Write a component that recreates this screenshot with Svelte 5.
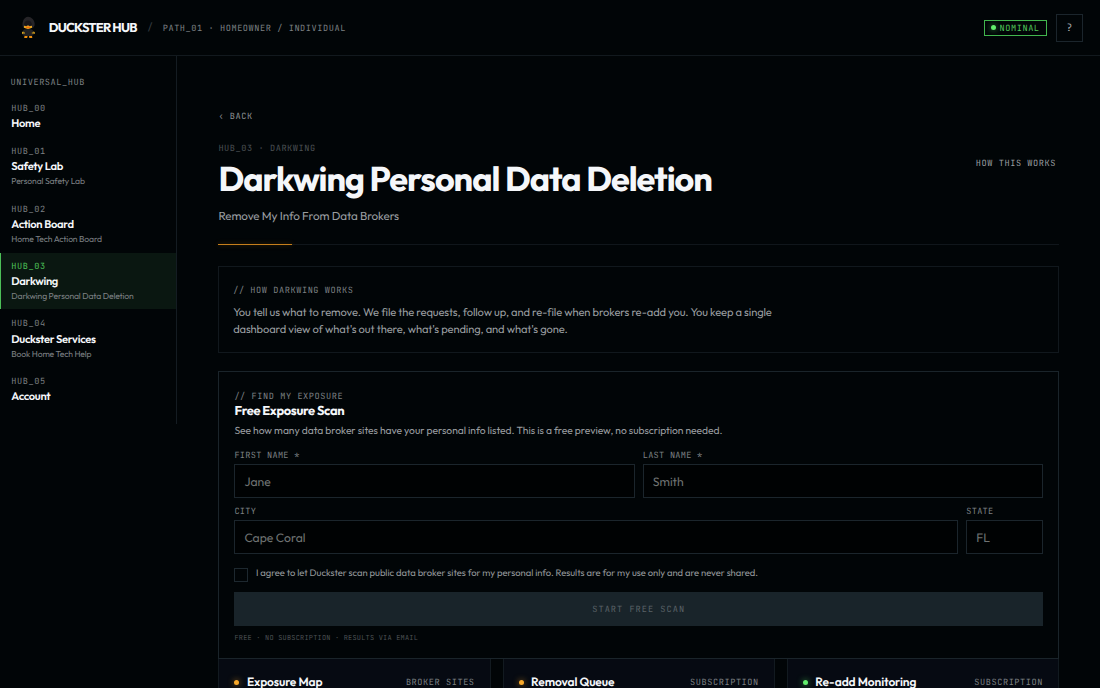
<script>
  const hubs = [
    { code: 'HUB_00', name: 'Home' },
    { code: 'HUB_01', name: 'Safety Lab', sub: 'Personal Safety Lab' },
    { code: 'HUB_02', name: 'Action Board', sub: 'Home Tech Action Board' },
    { code: 'HUB_03', name: 'Darkwing', sub: 'Darkwing Personal Data Deletion' },
    { code: 'HUB_04', name: 'Duckster Services', sub: 'Book Home Tech Help' },
    { code: 'HUB_05', name: 'Account' },
  ];

  const cards = [
    { title: 'Exposure Map', tag: 'BROKER SITES', tone: 'amber' },
    { title: 'Removal Queue', tag: 'SUBSCRIPTION', tone: 'amber' },
    { title: 'Re-add Monitoring', tag: 'SUBSCRIPTION', tone: 'green' },
  ];

  let active = $state('HUB_03');
  let firstName = $state('');
  let lastName = $state('');
  let city = $state('');
  let region = $state('');
  let agreed = $state(false);

  let ready = $derived(agreed && firstName !== '' && lastName !== '');
</script>

<div class="page">
  <header class="topbar">
    <svg class="logo" viewBox="0 0 16 24" aria-hidden="true">
      <path d="M3 11.500C1.500 7 3.500 1 8 .8c4 0 7.500 4.500 6.500 9L13 12H4z" fill="#252427" />
      <path d="M4 9.500C4 6 5.500 4.500 8 4.500s4 2 4 5z" fill="#17161a" />
      <path d="M4 9.700l2.500.5L8 9.300l1.500.9 2.500-.5v2l-2 .8-2 .5-2-.5-2-.8z" fill="#e9a820" />
      <path d="M5.500 10.800h5l-1 1.200h-3z" fill="#f5670f" />
      <path d="M4 13.500l4-.5 4 .5 1.500 2v3L12 20H4l-1.500-1.500v-3z" fill="#222224" />
      <path d="M2 16l1.500-.5v1H5v1H3.500L2 18zM14.800 16l-1.500-.5v1h-1.500v1h1.500l1.500.5z" fill="#d5a11f" />
      <path d="M4.500 20h3v1l-.5 1H4.200zM9 20h3l.3 2h-3z" fill="#f0900f" />
    </svg>
    <span class="brand">DUCKSTER HUB</span>
    <span class="slash">/</span>
    <span class="mono path">PATH_01 · HOMEOWNER / INDIVIDUAL</span>
    <span class="mono status"><i class="dot green"></i>NOMINAL</span>
    <button class="help">?</button>
  </header>

  <div class="body">
    <nav class="sidebar">
      <div class="mono nav-title">UNIVERSAL_HUB</div>
      {#each hubs as hub}
        <button class="hub" class:active={active === hub.code} onclick={() => (active = hub.code)}>
          <span class="mono code">{hub.code}</span>
          <span class="name">{hub.name}</span>
          {#if hub.sub}<span class="sub">{hub.sub}</span>{/if}
        </button>
      {/each}
    </nav>

    <main>
      <button class="mono back">‹ BACK</button>
      <div class="heading">
        <div>
          <div class="mono eyebrow">HUB_03 · DARKWING</div>
          <h1>Darkwing Personal Data Deletion</h1>
          <p class="tagline">Remove My Info From Data Brokers</p>
        </div>
        <button class="mono how-link">HOW THIS WORKS</button>
      </div>
      <div class="rule"><div class="rule-accent"></div></div>

      <section class="about">
        <div class="mono label">// HOW DARKWING WORKS</div>
        <p>
          You tell us what to remove. We file the requests, follow up, and re-file when brokers re-add you. You keep a single
          dashboard view of what's out there, what's pending, and what's gone.
        </p>
      </section>

      <section class="scan">
        <div class="mono label">// FIND MY EXPOSURE</div>
        <h2>Free Exposure Scan</h2>
        <p class="intro">See how many data broker sites have your personal info listed. This is a free preview, no subscription needed.</p>
        <div class="row">
          <label>
            <span class="mono">FIRST NAME *</span>
            <input placeholder="Jane" bind:value={firstName} />
          </label>
          <label>
            <span class="mono">LAST NAME *</span>
            <input placeholder="Smith" bind:value={lastName} />
          </label>
        </div>
        <div class="row">
          <label>
            <span class="mono">CITY</span>
            <input placeholder="Cape Coral" bind:value={city} />
          </label>
          <label class="state">
            <span class="mono">STATE</span>
            <input placeholder="FL" bind:value={region} />
          </label>
        </div>
        <label class="consent">
          <input type="checkbox" bind:checked={agreed} />
          <span>I agree to let Duckster scan public data broker sites for my personal info. Results are for my use only and are never shared.</span>
        </label>
        <button class="mono submit" disabled={!ready}>START FREE SCAN</button>
        <div class="mono note">FREE · NO SUBSCRIPTION · RESULTS VIA EMAIL</div>
      </section>

      <div class="cards">
        {#each cards as card}
          <article>
            <i class="dot {card.tone}"></i>
            <h3>{card.title}</h3>
            <span class="mono">{card.tag}</span>
          </article>
        {/each}
      </div>
    </main>
  </div>
</div>

<style>
  :global(body) {
    background: #010507;
    overflow: hidden;
  }

  * {
    box-sizing: border-box;
  }

  .page {
    height: 688px;
    overflow: hidden;
    background: #010507;
    color: #f5f7fa;
    font-family: Outfit, Lato, sans-serif;
    text-rendering: geometricPrecision;
    -webkit-font-smoothing: antialiased;
  }

  button,
  input {
    text-rendering: inherit;
  }

  button {
    background: none;
    border: none;
    border-radius: 0;
    padding: 0;
    color: inherit;
    font-family: inherit;
    text-align: left;
    cursor: pointer;
  }

  h1, h2, h3, p {
    margin: 0;
    white-space: nowrap;
  }

  .mono {
    font-family: 'JetBrains Mono', 'DejaVu Sans Mono', monospace;
    font-size: 8.6px;
    line-height: 12px;
    letter-spacing: 0.57px;
    color: #7c8083;
    white-space: nowrap;
  }

  .topbar {
    height: 56px;
    border-bottom: 1px solid #12191e;
    display: flex;
    align-items: center;
    padding: 0 17px 0 20px;
  }

  .logo {
    width: 16px;
    height: 24px;
    margin-right: 12.7px;
  }

  .brand {
    width: 89px;
    font-size: 12.9px;
    font-weight: 700;
    letter-spacing: -0.75px;
    white-space: nowrap;
  }

  .slash {
    width: 25px;
    padding-left: 10px;
    font-size: 12px;
    color: #343b40;
  }

  .path {
    padding-top: 1px;
  }

  .status {
    display: flex;
    align-items: center;
    gap: 4px;
    width: 63px;
    height: 16px;
    margin-left: auto;
    padding-left: 6px;
    border: 1px solid #42b64e;
    color: #4fc65a;
  }

  .dot {
    flex: none;
    width: 5px;
    height: 5px;
    border-radius: 50%;
  }

  .dot.green {
    background: #62ee6c;
    box-shadow: 0 0 6px #3aa84a;
  }

  .dot.amber {
    background: #f8a92b;
    box-shadow: 0 0 6px #a8701c;
  }

  .help {
    width: 27.5px;
    height: 28px;
    margin-left: 9px;
    border: 1px solid #1b252c;
    color: #a1a5a8;
    font-family: 'JetBrains Mono', 'DejaVu Sans Mono', monospace;
    font-size: 10.3px;
    text-align: center;
  }

  .body {
    display: flex;
    align-items: flex-start;
  }

  .sidebar {
    width: 177px;
    height: 368px;
    border-right: 1px solid #141c22;
    padding-top: 20.4px;
    display: flex;
    flex-direction: column;
    gap: 1.75px;
  }

  .nav-title {
    padding-left: 10.5px;
    margin-bottom: 5.6px;
  }

  .hub {
    display: flex;
    flex-direction: column;
    border-left: 1px solid transparent;
    padding: 6.6px 0 5.4px 10.3px;
  }

  .name {
    margin-top: 1.1px;
    font-size: 11.17px;
    line-height: 16px;
    font-weight: 600;
    letter-spacing: -0.3px;
    white-space: nowrap;
  }

  .sub {
    margin-top: 1.1px;
    font-size: 8.6px;
    line-height: 13.5px;
    letter-spacing: -0.14px;
    color: #7c8083;
    white-space: nowrap;
  }

  .hub.active {
    background: #0a1711;
    border-left-color: #4cc058;
  }

  .active .code {
    color: #4cc058;
  }

  main {
    flex: 1;
    padding: 53.9px 41px 0 41.4px;
  }

  .back {
    display: block;
    color: #8d9194;
  }

  .heading {
    display: flex;
    justify-content: space-between;
    margin-top: 20px;
  }

  .eyebrow {
    color: #4b5053;
  }

  h1 {
    margin-top: 4.8px;
    font-size: 34.2px;
    line-height: 40px;
    font-weight: 700;
    letter-spacing: -1px;
  }

  .tagline {
    margin-top: 9.3px;
    font-size: 11.7px;
    line-height: 18px;
    letter-spacing: -0.1px;
    color: #999da0;
  }

  .how-link {
    align-self: flex-start;
    margin-top: 14.7px;
    margin-right: 3px;
    color: #999da0;
  }

  .rule {
    height: 1px;
    margin-top: 18.2px;
    background: #10161b;
  }

  .rule-accent {
    width: 73.5px;
    height: 1px;
    background: #c67f1c;
    box-shadow: 0 0 5px rgba(245, 158, 11, 0.4);
  }

  .about {
    height: 86.5px;
    margin-top: 21px;
    border: 1px solid #11181d;
    padding: 17px 13.8px;
  }

  .about p {
    max-width: 560px;
    margin-top: 7.6px;
    font-size: 11.17px;
    line-height: 17.6px;
    letter-spacing: -0.115px;
    color: #999da0;
    white-space: normal;
  }

  .scan {
    height: 288px;
    margin-top: 18.3px;
    border: 1px solid #1a242a;
    padding: 18.2px 15px;
  }

  h2 {
    margin-top: 0.6px;
    font-size: 12.9px;
    line-height: 16px;
    font-weight: 700;
    letter-spacing: -0.33px;
  }

  .intro {
    margin: 4.5px 0 10.5px;
    font-size: 10.31px;
    line-height: 16px;
    letter-spacing: -0.035px;
    color: #999da0;
  }

  .row {
    display: flex;
    gap: 8px;
    height: 56px;
  }

  .row label {
    flex: 1;
    display: flex;
    flex-direction: column;
  }

  .row .state {
    flex: 0 0 76.7px;
  }

  .row .mono {
    line-height: 10px;
    letter-spacing: 0.28px;
    margin-bottom: 4.3px;
  }

  .row input {
    width: 100%;
    height: 34px;
    border: 1px solid #1b252c;
    border-radius: 0;
    padding: 2px 9px 0;
    background: #000203;
    color: #f5f7fa;
    font: 12.2px Outfit, Lato, sans-serif;
    outline: none;
  }

  .row input::placeholder {
    color: #6f7272;
  }

  .consent {
    display: flex;
    gap: 7.5px;
    height: 30px;
    padding-top: 6px;
    font-size: 9.45px;
    line-height: 11.6px;
    letter-spacing: -0.03px;
    color: #94989b;
    white-space: nowrap;
  }

  .consent input {
    appearance: none;
    width: 14px;
    height: 14px;
    margin: 0;
    border: 1px solid #1d282f;
  }

  .consent input:checked {
    background: #4cc058;
  }

  .submit {
    display: block;
    width: 100%;
    height: 34px;
    padding-top: 1px;
    background: #19242a;
    color: #596267;
    letter-spacing: 1.03px;
    text-align: center;
  }

  .note {
    margin-top: 7.6px;
    font-size: 6.9px;
    letter-spacing: 0.24px;
    color: #4b5053;
  }

  .cards {
    display: grid;
    grid-template-columns: repeat(3, 1fr);
    gap: 12px;
  }

  article {
    display: flex;
    align-items: center;
    height: 120px;
    padding: 0 15px 72.4px;
    background: #060a12;
    border: 1px solid #121a20;
    border-top: none;
  }

  h3 {
    flex: 1;
    margin-left: 7.5px;
    padding-top: 1px;
    font-size: 12px;
    line-height: 10px;
    font-weight: 600;
    letter-spacing: -0.13px;
  }
</style>
